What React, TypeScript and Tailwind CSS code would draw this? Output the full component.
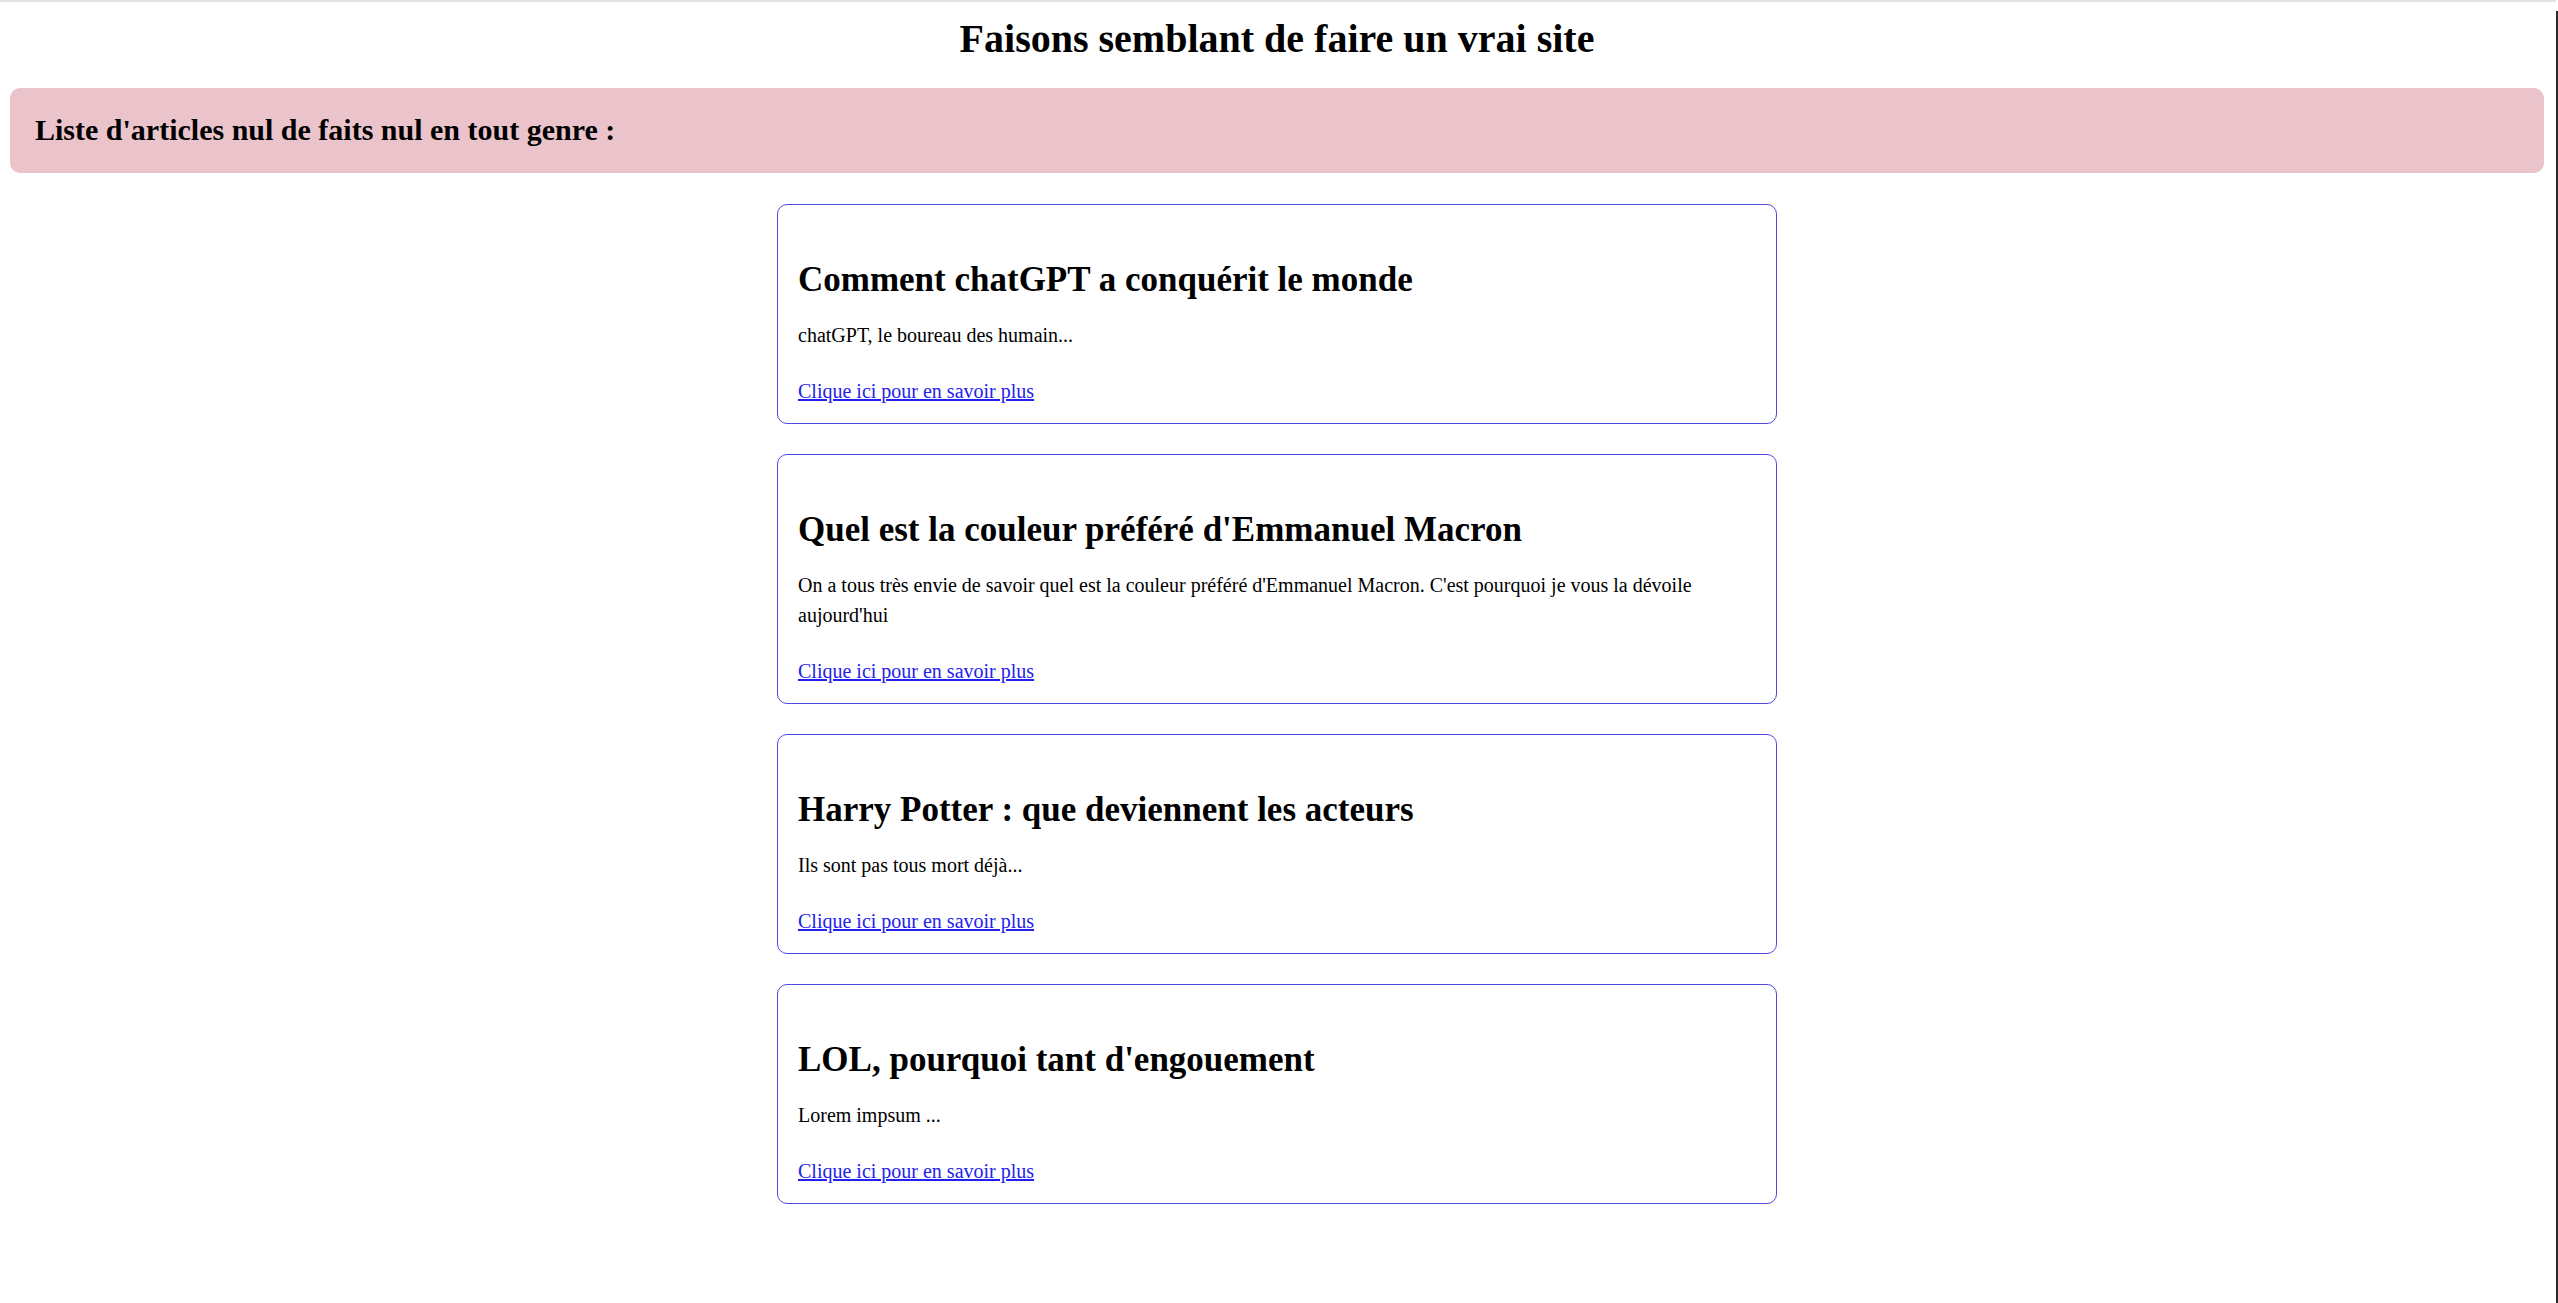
const articles = [
  {
    title: "Comment chatGPT a conquérit le monde",
    text: "chatGPT, le boureau des humain...",
  },
  {
    title: "Quel est la couleur préféré d'Emmanuel Macron",
    text: "On a tous très envie de savoir quel est la couleur préféré d'Emmanuel Macron. C'est pourquoi je vous la dévoile aujourd'hui",
  },
  {
    title: "Harry Potter : que deviennent les acteurs",
    text: "Ils sont pas tous mort déjà...",
  },
  {
    title: "LOL, pourquoi tant d'engouement",
    text: "Lorem impsum ...",
  },
];

function ArticleCard({ title, text }: { title: string; text: string }) {
  return (
    <article className="w-[1000px] rounded-[10px] border border-[#5048e5] px-5 pt-[55px] pb-[17px]">
      <h2 className="text-[35px] leading-[40px] font-bold text-black">{title}</h2>
      <p className="mt-5 text-[20px] leading-[30px] text-black">{text}</p>
      <div className="mt-[26px] text-[20px] leading-[30px]">
        <a href="#" className="text-[#2222ee] underline">
          Clique ici pour en savoir plus
        </a>
      </div>
    </article>
  );
}

export default function App() {
  return (
    <div
      className="flex min-h-[1303px] w-[2558px] bg-white"
      style={{ fontFamily: "'Liberation Serif', 'Times New Roman', serif" }}
    >
      <div className="w-[2556px] flex flex-col">
        {/* thin grey bar at the very top */}
        <div className="h-[2px] w-full bg-[#e2e2e2]" />

        <div className="w-[2554px] flex flex-col">
          <h1 className="mt-[14px] text-center text-[40px] leading-[46px] font-bold text-black">
            Faisons semblant de faire un vrai site
          </h1>

          <div className="mx-[10px] mt-[26px] rounded-[10px] bg-[#ebc4cb] px-[25px] pt-[25px] pb-[26px]">
            <h2 className="text-[30px] leading-[34px] font-bold text-black">
              Liste d'articles nul de faits nul en tout genre :
            </h2>
          </div>

          <div className="mt-[31px] flex flex-col items-center gap-[30px] pb-10">
            {articles.map((a) => (
              <ArticleCard key={a.title} title={a.title} text={a.text} />
            ))}
          </div>
        </div>
      </div>

      {/* window edge on the right */}
      <div className="w-[2px] pt-[11px] flex flex-col">
        <div className="flex-1 bg-[#2b2b2b]" />
      </div>
    </div>
  );
}
